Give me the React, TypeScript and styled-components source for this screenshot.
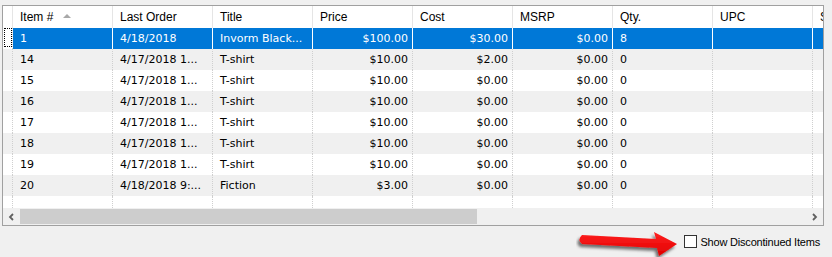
import React, { FC } from 'react'
import styled, { createGlobalStyle, css } from 'styled-components'

type Align = 'left' | 'right'

type Column = {
  key: string
  label: string
  align?: Align
  sorted?: boolean
}

type Item = Record<string, string>

const columns: Column[] = [
  { key: 'item', label: 'Item #', sorted: true },
  { key: 'lastOrder', label: 'Last Order' },
  { key: 'title', label: 'Title' },
  { key: 'price', label: 'Price', align: 'right' },
  { key: 'cost', label: 'Cost', align: 'right' },
  { key: 'msrp', label: 'MSRP', align: 'right' },
  { key: 'qty', label: 'Qty.' },
  { key: 'upc', label: 'UPC' },
  { key: 'sku', label: 'SKU' },
]

const shirt = (item: string): Item => ({
  item,
  lastOrder: '4/17/2018 1...',
  title: 'T-shirt',
  price: '$10.00',
  cost: '$0.00',
  msrp: '$0.00',
  qty: '0',
  upc: '',
  sku: '',
})

const items: Item[] = [
  {
    item: '1',
    lastOrder: '4/18/2018',
    title: 'Invorm Black...',
    price: '$100.00',
    cost: '$30.00',
    msrp: '$0.00',
    qty: '8',
    upc: '',
    sku: '',
  },
  { ...shirt('14'), cost: '$2.00' },
  shirt('15'),
  shirt('16'),
  shirt('17'),
  shirt('18'),
  shirt('19'),
  {
    item: '20',
    lastOrder: '4/18/2018 9:...',
    title: 'Fiction',
    price: '$3.00',
    cost: '$0.00',
    msrp: '$0.00',
    qty: '0',
    upc: '',
    sku: '',
  },
]

const GlobalStyle = createGlobalStyle`
  html, body {
    margin: 0;
    padding: 0;
    background: #f0f0f0;
  }
  body {
    font-family: "DejaVu Sans", Tahoma, sans-serif;
    color: #000;
  }
`

const Window = styled.div`
  width: 832px;
  height: 257px;
  padding: 5px 8px 0 2px;
  box-sizing: border-box;
  display: flex;
  flex-direction: column;
`

const Grid = styled.div`
  height: 225px;
  border: 1px solid #a0a0a0;
  background: #fff;
  box-sizing: border-box;
  display: flex;
  flex-direction: column;
  overflow: hidden;
`

const HeaderRow = styled.div`
  display: flex;
  height: 22px;
  flex-shrink: 0;
  background: #fff;
`

const Row = styled.div<{ $alt?: boolean; $selected?: boolean }>`
  display: flex;
  height: 21px;
  flex-shrink: 0;
  background: ${p => (p.$selected ? '#0078d7' : p.$alt ? '#f0f0f0' : '#fff')};
  color: ${p => (p.$selected ? '#fff' : '#000')};
`

const Filler = styled(Row)`
  flex: 1;
  height: auto;
`

const Indicator = styled.div<{ $header?: boolean; $focus?: boolean }>`
  width: 10px;
  flex-shrink: 0;
  box-sizing: border-box;
  position: relative;
  border-right: ${p => (p.$header ? '1px solid #e5e5e5' : '1px dotted #cfcfcf')};
  background: ${p => (p.$focus ? '#fff' : 'transparent')};

  ${p =>
    p.$focus &&
    css`
      &::after {
        content: '';
        position: absolute;
        left: 1px;
        top: 0;
        width: 8px;
        height: 19px;
        box-sizing: border-box;
        border: 1px dotted #000;
      }
    `}
`

const HeaderCell = styled.div`
  width: 100px;
  flex-shrink: 0;
  box-sizing: border-box;
  padding-left: 7px;
  border-right: 1px solid #e5e5e5;
  display: flex;
  align-items: center;
  gap: 10px;
  font-family: "Liberation Sans", Arial, sans-serif;
  font-size: 12px;
  white-space: nowrap;
  overflow: hidden;
`

const SortArrow = styled.span`
  width: 0;
  height: 0;
  border-left: 4px solid transparent;
  border-right: 4px solid transparent;
  border-bottom: 4px solid #a8a8a8;
  margin-top: -2px;
`

const Cell = styled.div<{ $align?: Align; $selected?: boolean }>`
  width: 100px;
  flex-shrink: 0;
  box-sizing: border-box;
  padding: 0 4px 0 7px;
  border-right: ${p => (p.$selected ? '1px solid #fff' : '1px dotted #cfcfcf')};
  display: flex;
  align-items: center;
  justify-content: ${p => (p.$align === 'right' ? 'flex-end' : 'flex-start')};
  font-size: 11px;
  white-space: nowrap;
  overflow: hidden;
`

const ScrollBar = styled.div`
  height: 17px;
  flex-shrink: 0;
  display: flex;
  align-items: stretch;
  background: #f0f0f0;
`

const ScrollButton = styled.div`
  width: 17px;
  flex-shrink: 0;
  display: flex;
  align-items: center;
  justify-content: center;
  color: #606060;
`

const Track = styled.div`
  flex: 1;
  display: flex;
  padding: 1px 0;
`

const Thumb = styled.div`
  width: 457px;
  background: #cdcdcd;
`

const Footer = styled.div`
  flex: 1;
  display: flex;
  align-items: center;
  justify-content: flex-end;
  padding-right: 4px;
`

const ArrowMark = styled.svg`
  margin-right: 2px;
  margin-top: 2px;
`

const CheckLabel = styled.label`
  display: flex;
  align-items: center;
  gap: 3px;
  font-family: "Liberation Sans", Arial, sans-serif;
  font-size: 11px;
  letter-spacing: -0.2px;
  color: #000;
`

const Box = styled.span`
  width: 13px;
  height: 13px;
  box-sizing: border-box;
  border: 1px solid #333;
  background: #fff;
`

const Chevron: FC<{ dir: 'left' | 'right' }> = ({ dir }) => (
  <svg width="7" height="8" viewBox="0 0 7 8">
    <path
      d={dir === 'left' ? 'M5 1 L2 4 L5 7' : 'M2 1 L5 4 L2 7'}
      fill="none"
      stroke="#606060"
      strokeWidth="1.8"
    />
  </svg>
)

const RedArrow: FC = () => (
  <ArrowMark width="106" height="29" viewBox="0 0 106 29">
    <defs>
      <filter id="shade" x="-10%" y="-30%" width="120%" height="170%">
        <feDropShadow dx="-2" dy="3" stdDeviation="1.6" floodColor="#000" floodOpacity="0.55" />
      </filter>
      <linearGradient id="red" x1="0" y1="0" x2="0" y2="1">
        <stop offset="0" stopColor="#ff2020" />
        <stop offset="1" stopColor="#e00000" />
      </linearGradient>
    </defs>
    <path
      d="M6 7 L80 11 L78 4 L101 16 L83 28 L81 20 L6 16 Q1 11.5 6 7 Z"
      fill="url(#red)"
      filter="url(#shade)"
    />
  </ArrowMark>
)

export default function App() {
  return (
    <Window>
      <GlobalStyle />
      <Grid>
        <HeaderRow>
          <Indicator $header />
          {columns.map(col => (
            <HeaderCell key={col.key}>
              {col.label}
              {col.sorted && <SortArrow />}
            </HeaderCell>
          ))}
        </HeaderRow>
        {items.map((row, i) => (
          <Row key={row.item} $selected={i === 0} $alt={i % 2 === 1}>
            <Indicator $focus={i === 0} />
            {columns.map(col => (
              <Cell key={col.key} $align={col.align} $selected={i === 0}>
                {row[col.key]}
              </Cell>
            ))}
          </Row>
        ))}
        <Filler>
          <Indicator />
          {columns.map(col => (
            <Cell key={col.key} />
          ))}
        </Filler>
        <ScrollBar>
          <ScrollButton>
            <Chevron dir="left" />
          </ScrollButton>
          <Track>
            <Thumb />
          </Track>
          <ScrollButton>
            <Chevron dir="right" />
          </ScrollButton>
        </ScrollBar>
      </Grid>
      <Footer>
        <RedArrow />
        <CheckLabel>
          <Box />
          Show Discontinued Items
        </CheckLabel>
      </Footer>
    </Window>
  )
}
